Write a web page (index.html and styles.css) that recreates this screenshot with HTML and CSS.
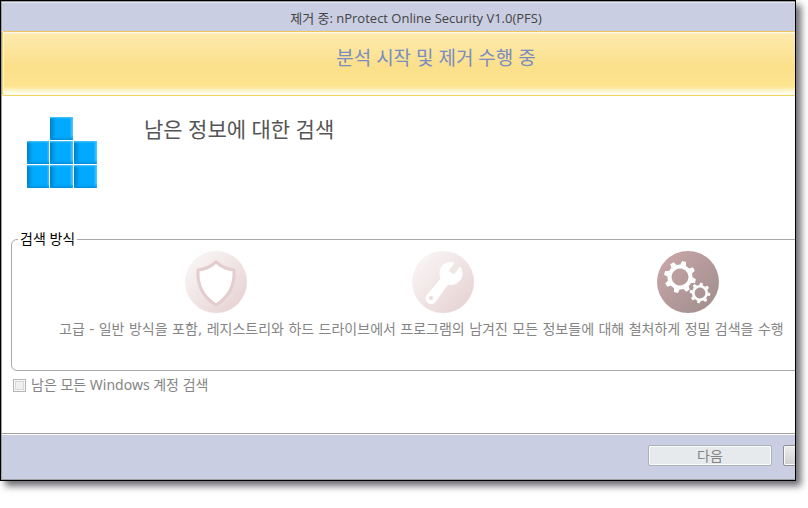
FILE: index.html
```
<!DOCTYPE html>
<html lang="ko">
	<head>
		<meta charset="utf-8">
		<title>제거 중</title>
		<meta name="viewport" content="width=device-width, initial-scale=1.0">
		<link rel="stylesheet" href="styles.css">
	</head>
	<body>
		<div class="frame">
			<div class="window">
				<div class="titlebar">제거 중: nProtect Online Security V1.0(PFS)</div>
				<div class="banner">분석 시작 및 제거 수행 중</div>
				<main class="content">
					<div class="heading">
						<svg class="logo" width="72" height="72" viewBox="0 0 72 72" aria-hidden="true">
							<defs>
								<linearGradient id="cubeh">
									<stop offset="0" stop-color="#007fc4"/>
									<stop offset=".25" stop-color="#00aaff"/>
									<stop offset=".85" stop-color="#00aaff"/>
									<stop offset="1" stop-color="#5cc8ff"/>
								</linearGradient>
								<linearGradient id="cubev" x2="0" y2="1">
									<stop offset="0" stop-color="#5cc8ff"/>
									<stop offset=".12" stop-color="#00aaff" stop-opacity="0"/>
									<stop offset=".8" stop-color="#00aaff" stop-opacity="0"/>
									<stop offset="1" stop-color="#008ad6"/>
								</linearGradient>
								<g id="cube">
									<rect width="23" height="23" rx="1" fill="url(#cubeh)"/>
									<rect width="23" height="23" rx="1" fill="url(#cubev)"/>
								</g>
							</defs>
							<use href="#cube" x="24" y="0"/>
							<use href="#cube" x="1" y="24"/>
							<use href="#cube" x="24" y="24"/>
							<use href="#cube" x="48" y="24"/>
							<use href="#cube" x="1" y="48"/>
							<use href="#cube" x="24" y="48"/>
							<use href="#cube" x="48" y="48"/>
							<path d="M23.500 24v48M47.500 24v48" stroke="#fff"/>
						</svg>
						<h1>남은 정보에 대한 검색</h1>
					</div>
					<fieldset class="modes">
						<legend>검색 방식</legend>
						<div class="mode-list">
							<button class="mode" type="button" aria-label="보통">
								<svg width="62" height="62" viewBox="0 0 62 62">
									<defs>
										<linearGradient id="pale" x1="0" y1="0" x2="1" y2="1">
											<stop offset=".1" stop-color="#f9f5f5"/>
											<stop offset=".9" stop-color="#e7d3d4"/>
										</linearGradient>
									</defs>
									<circle cx="31" cy="31" r="31" fill="url(#pale)"/>
									<path d="M31 11Q39 18 49 19C50 34 44 46 31 54C18 46 12 34 13 19Q23 18 31 11Z" fill="#fff" stroke="#e4cdcf" stroke-width="3"/>
								</svg>
							</button>
							<button class="mode" type="button" aria-label="중간">
								<svg width="62" height="62" viewBox="0 0 62 62">
									<circle cx="31" cy="31" r="31" fill="url(#pale)"/>
									<path d="M42 12C35 9 27 15 28 23Q28 26 29 28L15 44C11 49 18 56 23 51L36 33C43 35 50 30 50 23Q50 18 48 16L42 24L36 20Z" fill="#fff" stroke="#fff" stroke-linejoin="round"/>
									<circle cx="19" cy="47" r="2" fill="#ead9da"/>
								</svg>
							</button>
							<button class="mode" type="button" aria-label="고급">
								<svg width="62" height="62" viewBox="0 0 62 62">
									<defs>
										<linearGradient id="dark" x1="0" y1="0" x2="1" y2="1">
											<stop offset=".1" stop-color="#c7a5a6"/>
											<stop offset=".9" stop-color="#a38f8f"/>
										</linearGradient>
										<g id="gear">
											<circle r="10.500" fill="none" stroke="#fff" stroke-width="4"/>
											<path id="teeth" d="M-3 -12L-2 -16H2L3 -12ZM-3 12L-2 16H2L3 12ZM-12 -3L-16 -2V2L-12 3ZM12 -3L16 -2V2L12 3Z" fill="#fff"/>
											<use href="#teeth" transform="rotate(45)"/>
										</g>
									</defs>
									<circle cx="31" cy="31" r="31" fill="url(#dark)"/>
									<use href="#gear" transform="translate(23 26) rotate(15)"/>
									<use href="#gear" transform="translate(43 42) rotate(8) scale(.64)"/>
								</svg>
							</button>
						</div>
						<p class="mode-text">고급 - 일반 방식을 포함, 레지스트리와 하드 드라이브에서 프로그램의 남겨진 모든 정보들에 대해 철처하게 정밀 검색을 수행</p>
					</fieldset>
					<div class="accounts">
						<input type="checkbox" id="accounts" disabled>
						<label for="accounts">남은 모든 Windows 계정 검색</label>
					</div>
				</main>
				<footer class="footer">
					<button class="btn" type="button" disabled>다음</button>
					<button class="btn btn-cancel" type="button" aria-label="취소"></button>
				</footer>
			</div>
		</div>
	</body>
</html>
```
FILE: styles.css
```
* {
	box-sizing: border-box;
}
body {
	margin: 0;
	padding-bottom: 24px;
	background-color: #fff;
	color: #555;
	font-family: "Noto Sans", "Noto Sans CJK KR", sans-serif;
	font-size: 14px;
	line-height: 20px;
}
.frame {
	margin-right: 12px;
	border: 1px solid #000;
	overflow: hidden;
	box-shadow: 5px 5px 7px rgba(10,10,20,0.6);
}
/* the window is wider than the frame and runs out on the right */
.window {
	width: calc(100% + 76px);
	border: 1px solid #a0a0a4;
	border-top-color: #9a9a9f;
	background-color: #fff;
}
.titlebar {
	height: 29px;
	padding: 5px 40px 0 0;
	border-top: 1px solid #e4e6f1;
	background-color: #cacee2;
	color: #444;
	font-family: "Open Sans", "Noto Sans CJK KR", sans-serif;
	font-size: 13px;
	text-align: center;
}
.banner {
	height: 65px;
	padding-top: 13px;
	border: 1px solid #f2d35c;
	border-top-color: #efc55c;
	border-radius: 2px;
	background: linear-gradient(#fff 0, #fdeaad 2px, #fbe08a 55%, #fde48f 86%, #fffbe0 96%, #fff 100%);
	box-shadow: inset 1px 0 0 #fff5d0;
	color: #7a8cc0;
	font-size: 19px;
	line-height: 26px;
	text-align: center;
}
.content {
	padding: 21px 9px 38px;
}
.heading {
	display: flex;
	gap: 46px;
	padding-left: 15px;
	height: 112px;
}
h1 {
	margin: 0;
	color: #555;
	font-size: 21px;
	font-weight: normal;
	line-height: 24px;
}
.modes {
	min-width: 0;
	height: 142px;
	margin: 0;
	padding: 0;
	border: 1px solid #aaa;
	border-radius: 6px;
}
.modes legend {
	margin-left: 6px;
	padding: 0 2px;
	color: #000;
}
.mode-list {
	display: grid;
	grid-template-columns: 227px 245px 62px;
	padding: 2px 0 0 173px;
}
.mode {
	display: block;
	width: 62px;
	height: 62px;
	padding: 0;
	border: none;
	background: none;
	cursor: pointer;
}
.mode svg {
	display: block;
}
.mode-text {
	margin: 6px 0 0 47px;
	color: #858585;
	font-family: "DejaVu Sans", "Noto Sans CJK KR", sans-serif;
	white-space: nowrap;
}
.accounts {
	display: flex;
	align-items: center;
	gap: 5px;
	margin-top: 4px;
	padding-left: 2px;
	color: #858585;
}
.accounts input {
	appearance: none;
	width: 13px;
	height: 13px;
	margin: 0;
	border: 1px solid #b5b5b5;
	background-color: #f0f0f0;
	box-shadow: inset 0 0 0 1px #f8f8f8, inset 0 0 0 2px #d8d8d8;
}
.footer {
	display: flex;
	justify-content: flex-end;
	gap: 11px;
	padding: 11px 11px 13px;
	border-top: 1px solid #a0a0a4;
	box-shadow: inset 0 1px 0 #fff;
	background-color: #cacee2;
}
.btn {
	width: 124px;
	height: 21px;
	padding: 0;
	border: 1px solid #adb2b5;
	border-radius: 2px;
	background-color: #e6eaed;
	box-shadow: inset 0 0 0 1px #f8fafb;
	color: #838383;
	font-family: inherit;
	font-size: 14px;
	line-height: 18px;
}
.btn-cancel {
	width: 76px;
	border-color: #8f8f93;
	background: linear-gradient(#ececec, #d0d0d0);
}
```
